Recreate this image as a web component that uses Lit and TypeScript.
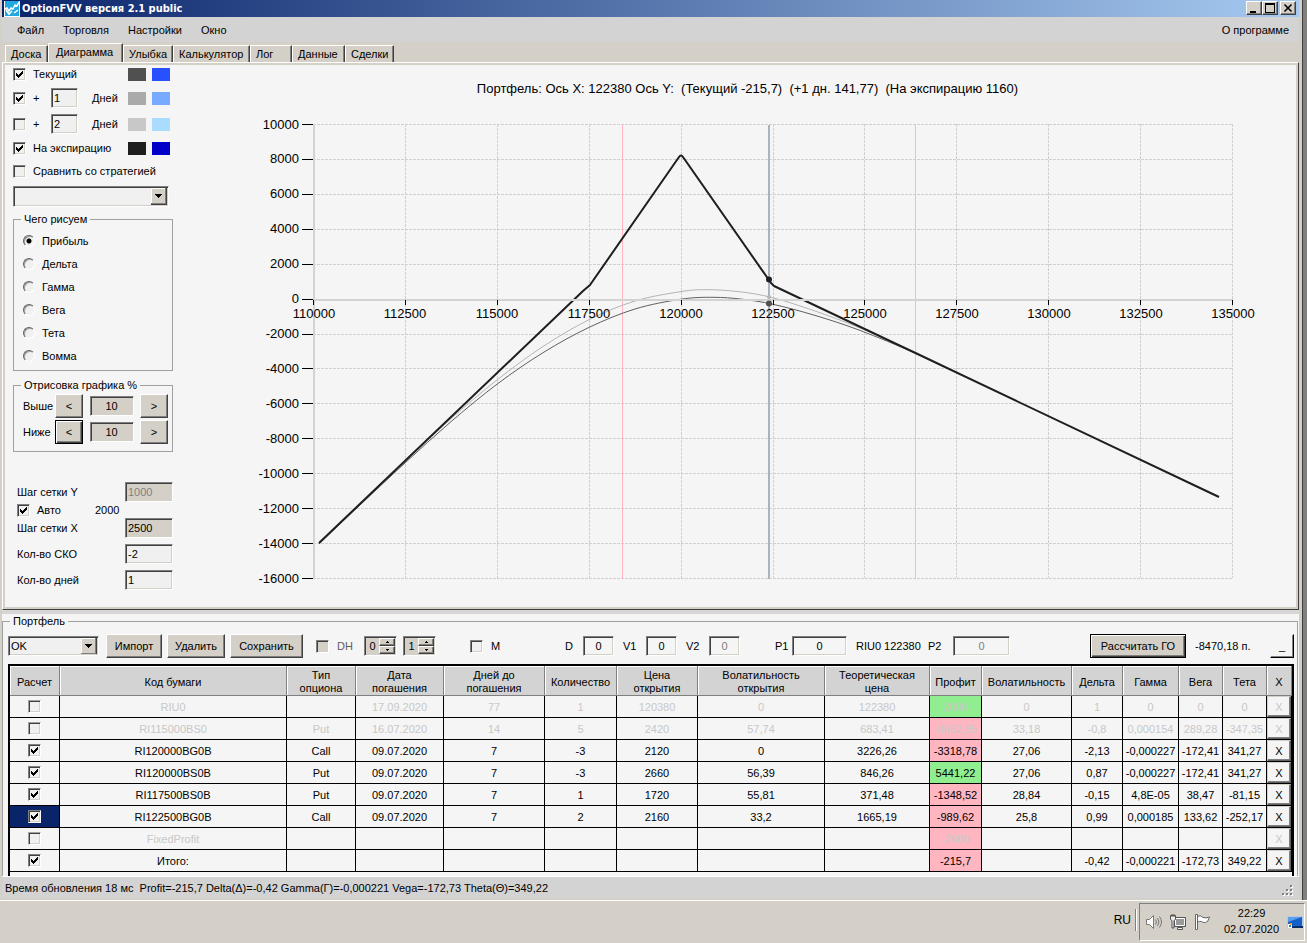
import { LitElement, html, svg, css, nothing } from "lit";
import { customElement } from "lit/decorators.js";
import { classMap } from "lit/directives/class-map.js";
import { styleMap } from "lit/directives/style-map.js";

interface Row {
  on: boolean;
  dim?: boolean;
  selected?: boolean;
  sign: "up" | "down";
  cells: string[];
}

type Point = [number, number];

const COLUMNS: { title: string; width?: number }[] = [
  { title: "Расчет", width: 50 },
  { title: "Код бумаги" },
  { title: "Тип опциона", width: 69 },
  { title: "Дата погашения", width: 88 },
  { title: "Дней до погашения", width: 101 },
  { title: "Количество", width: 72 },
  { title: "Цена открытия", width: 81 },
  { title: "Волатильность открытия", width: 127 },
  { title: "Теоретическая цена", width: 105 },
  { title: "Профит", width: 52 },
  { title: "Волатильность", width: 90 },
  { title: "Дельта", width: 51 },
  { title: "Гамма", width: 56 },
  { title: "Вега", width: 44 },
  { title: "Тета", width: 44 },
  { title: "X", width: 25 },
];
const PROFIT = 8;

const ROWS: Row[] = [
  { on: false, dim: true, sign: "up", cells: ["RIU0", "", "17.09.2020", "77", "1", "120380", "0", "122380", "2000", "0", "1", "0", "0", "0"] },
  { on: false, dim: true, sign: "down", cells: ["RI115000BS0", "Put", "16.07.2020", "14", "5", "2420", "57,74", "683,41", "-8682,95", "33,18", "-0,8", "0,000154", "289,28", "-347,35"] },
  { on: true, sign: "down", cells: ["RI120000BG0B", "Call", "09.07.2020", "7", "-3", "2120", "0", "3226,26", "-3318,78", "27,06", "-2,13", "-0,000227", "-172,41", "341,27"] },
  { on: true, sign: "up", cells: ["RI120000BS0B", "Put", "09.07.2020", "7", "-3", "2660", "56,39", "846,26", "5441,22", "27,06", "0,87", "-0,000227", "-172,41", "341,27"] },
  { on: true, sign: "down", cells: ["RI117500BS0B", "Put", "09.07.2020", "7", "1", "1720", "55,81", "371,48", "-1348,52", "28,84", "-0,15", "4,8E-05", "38,47", "-81,15"] },
  { on: true, selected: true, sign: "down", cells: ["RI122500BG0B", "Call", "09.07.2020", "7", "2", "2160", "33,2", "1665,19", "-989,62", "25,8", "0,99", "0,000185", "133,62", "-252,17"] },
  { on: false, dim: true, sign: "down", cells: ["FixedProfit", "", "", "", "", "", "", "", "-2080", "", "", "", "", ""] },
  { on: true, sign: "down", cells: ["Итого:", "", "", "", "", "", "", "", "-215,7", "", "-0,42", "-0,000221", "-172,73", "349,22"] },
];

const common = css`
  * { box-sizing: border-box; }
  button, input, select { font: inherit; color: inherit; margin: 0; border-radius: 0; outline: 0; }
  button {
    display: inline-flex; align-items: center; justify-content: center; padding: 0;
    background: #d4d0c8; border: 1px solid; border-color: #fff #404040 #404040 #fff;
    box-shadow: inset -1px -1px #808080; white-space: nowrap;
  }
  button.focused { border-color: #000; box-shadow: inset 1px 1px #fff, inset -1px -1px #404040, inset -2px -2px #808080; }
  .field {
    height: 20px; min-width: 0; padding: 0 2px; background: #f0f0f0;
    border: 1px solid; border-color: #808080 #fff #fff #808080;
    box-shadow: inset 1px 1px #404040, inset -1px -1px #d4d0c8;
  }
  .field.grey { background: #d4d0c8; }
  .field.centre { text-align: center; }
  .field:disabled { color: #808080; }
  input[type="checkbox"] {
    appearance: none; flex: none; width: 13px; height: 13px; background: #f0f0f0 no-repeat;
    border: 1px solid; border-color: #808080 #fff #fff #808080;
    box-shadow: inset 1px 1px #404040, inset -1px -1px #d4d0c8; background-origin: border-box;
  }
  input[type="checkbox"]:checked {
    background-image: url("data:image/svg+xml,%3Csvg xmlns='http://www.w3.org/2000/svg' width='13' height='13'%3E%3Cpath d='M3 5h1v3h-1zM4 6h1v3h-1zM5 7h1v3h-1zM6 6h1v3h-1zM7 5h1v3h-1zM8 4h1v3h-1zM9 3h1v3h-1z'/%3E%3C/svg%3E");
  }
  input[type="radio"] {
    appearance: none; flex: none; width: 12px; height: 12px; border-radius: 50%; background: #f0f0f0;
    border: 1px solid; border-color: #606060 #fff #fff #606060; box-shadow: inset 1px 1px #a0a0a0;
  }
  input[type="radio"]:checked { background: radial-gradient(circle at center, #000 2px, #f0f0f0 3px); }
  select {
    appearance: none; height: 21px; padding: 0 20px 0 2px; width: 100%;
    border: 1px solid; border-color: #808080 #fff #fff #808080;
    box-shadow: inset 1px 1px #404040, inset -1px -1px #d4d0c8;
    background: #f0f0f0 url("data:image/svg+xml,%3Csvg xmlns='http://www.w3.org/2000/svg' width='16' height='17' shape-rendering='crispEdges'%3E%3Cpath fill='%23404040' d='M0 0h16v17H0z'/%3E%3Cpath fill='%23808080' d='M0 0h15v16H0z'/%3E%3Cpath fill='%23fff' d='M0 0h14v15H0z'/%3E%3Cpath fill='%23d4d0c8' d='M1 1h13v14H1z'/%3E%3Cpath d='M4 6h7v1H4zM5 7h5v1H5zM6 8h3v1H6zM7 9h1v1H7z'/%3E%3C/svg%3E") no-repeat right 1px top 1px;
  }
  fieldset { min-width: 0; margin: 0; border: 1px solid #a0a0a0; box-shadow: none; }
  legend { padding: 0 3px; height: 14px; line-height: 14px; }
`;

/* Profit diagram: grid, expiry payoff and the two current curves. */
@customElement("profit-chart")
export class ProfitChart extends LitElement {
  static styles = css`
    :host { display: flex; flex-direction: column; min-width: 0; }
    h2 { margin: 0; padding-top: 18px; font-size: 13px; line-height: 16px; font-weight: 400; text-align: center; white-space: pre; }
    svg { flex: 1; width: 100%; min-height: 0; display: block; }
    text { font-size: 13px; fill: #000; }
    .grid { stroke: #d0d0d0; stroke-dasharray: 3 1; fill: none; }
    .tick { stroke: #000; }
    .axis { stroke: #d3d3d3; stroke-width: 2; }
    .sigma { stroke: #ffb6c1; }
    .price { stroke: #a9b4be; stroke-width: 2; }
    .current { stroke: #606060; fill: none; }
    .next { stroke: #b4b4b4; fill: none; }
    .expiry { stroke: #1e1e1e; stroke-width: 2; fill: none; stroke-linejoin: round; }
    .dot-expiry { fill: #1e1e1e; }
    .dot-current { fill: #505050; }
    .dot-next { fill: #b4b4b4; }
  `;

  private x(v: number) { return 313.5 + ((v - 110000) / 25000) * 919; }
  private y(v: number) { return 124.5 + ((10000 - v) / 26000) * 454; }

  private smooth(p: Point[]) {
    let d = `M${p[0][0]} ${p[0][1]}`;
    for (let i = 0; i < p.length - 1; i++) {
      const a = p[Math.max(i - 1, 0)], b = p[i], c = p[i + 1], e = p[Math.min(i + 2, p.length - 1)];
      d += `C${b[0] + (c[0] - a[0]) / 6} ${b[1] + (c[1] - a[1]) / 6} ${c[0] - (e[0] - b[0]) / 6} ${c[1] - (e[1] - b[1]) / 6} ${c[0]} ${c[1]}`;
    }
    return d;
  }

  render() {
    const xs = Array.from({ length: 11 }, (_, i) => 110000 + i * 2500);
    const ys = Array.from({ length: 14 }, (_, i) => 10000 - i * 2000);
    const snap = (n: number) => Math.floor(n) + 0.5;
    const zero = this.y(0);
    const current: Point[] = [[319, 544], [360, 505], [405, 463], [450, 422.5], [497, 384.2], [543, 352.7], [589, 327.4], [635, 309], [681, 299.2], [713, 297.3], [742, 299.2], [773, 304.3], [815, 315.4], [860, 330.4], [915, 353], [960, 374]];
    const next: Point[] = [[319, 543], [360, 504], [405, 461.5], [450, 419.5], [497, 380], [543, 346.5], [589, 319.7], [635, 301], [681, 291.6], [707, 289.7], [740, 291.8], [773, 297.8], [815, 311], [860, 328], [915, 352], [960, 374]];
    return html`
      <h2>Портфель: Ось X: 122380 Ось Y:  (Текущий -215,7)  (+1 дн. 141,77)  (На экспирацию 1160)</h2>
      <svg viewBox="200 97 1095 510" role="img" aria-label="Портфель">
        ${xs.map((v) => svg`<path class="grid" d="M${snap(this.x(v))} 124V578"/>`)}
        ${ys.map((v) => svg`<path class="grid" d="M313 ${snap(this.y(v))}H1233"/>`)}
        <path class="axis" d="M314 124V579" />
        <path class="sigma" d="M622.5 125V579" />
        <path class="sigma" d="M915.5 125V579" />
        <path class="price" d="M769 125V579" />
        <path class="current" d=${this.smooth(current)} />
        <path class="next" d=${this.smooth(next)} />
        <path class="expiry" d="M319 543L583 291L590 285L679 157Q681 154 683 157L771 283L774 286L1219 497" />
        <path class="axis" d="M313 ${Math.round(zero) + 1}H1233" />
        <circle class="dot-next" cx="769" cy="297" r="2" />
        <circle class="dot-expiry" cx="769" cy="279.5" r="3" />
        <circle class="dot-current" cx="769" cy="303.5" r="3" />
        ${ys.map((v) => svg`<path class="tick" d="M302 ${snap(this.y(v))}H313"/><text x="299" y=${Math.round(this.y(v)) + 4} text-anchor="end">${v}</text>`)}
        ${xs.map((v) => svg`<path class="tick" d="M${snap(this.x(v))} 300V305"/><text x=${Math.round(this.x(v))} y="318" text-anchor="middle">${v}</text>`)}
      </svg>`;
  }
}

@customElement("chart-settings")
export class ChartSettings extends LitElement {
  static styles = [common, css`
    :host { display: block; padding: 0 0 12px 7px; }
    .inner { width: 160px; }
    .line { display: grid; align-items: center; height: 22px; }
    .line label { white-space: nowrap; }
    .line.num { grid-template-columns: 20px 18px 27px 14px 1fr 18px 6px 18px; height: 26px; }
    .line.plain { grid-template-columns: 20px 1fr 18px 6px 18px; }
    .line.last { height: 24px; grid-template-columns: 20px 1fr; }
    .colors { padding-right: 3px; }
    .swatch { height: 13px; }
    .days { grid-column: 5; }
    .g50 { background: #505050; } .b1 { background: #2850ff; }
    .gaa { background: #aaa; } .b2 { background: #78aaff; }
    .gc8 { background: #c8c8c8; } .b3 { background: #aadcff; }
    .g1e { background: #1e1e1e; } .b4 { background: #0000c8; }
    .strategy { width: 156px; display: block; margin-top: 3px; }
    fieldset { padding: 3px 9px; margin-top: 5px; }
    legend { margin-left: -2px; }
    .radio { display: flex; gap: 7px; align-items: center; height: 23px; }
    .range { padding: 1px 4px 6px 9px; margin-top: 7px; }
    .step { display: grid; grid-template-columns: 32px 28px 1fr 28px; align-items: center; height: 26px; }
    .step button { height: 24px; }
    .step .field { width: 44px; justify-self: center; }
    .form { margin: 30px 0 0 4px; width: 156px; display: grid; grid-template-columns: 78px 30px 48px; align-items: center; }
    .form .caption { grid-column: 1 / 3; }
    .form .field { width: 48px; }
    .auto { grid-column: 1; display: flex; align-items: center; gap: 7px; height: 16px; }
    .value { grid-column: 2 / 4; }
    .form .spaced { margin-top: 6px; }
  `];

  private swatches(a: string, b: string) {
    return html`<span class="swatch ${a}"></span><span></span><span class="swatch ${b}"></span>`;
  }

  render() {
    const kinds = ["Прибыль", "Дельта", "Гамма", "Вега", "Тета", "Вомма"];
    const steps = ["Выше", "Ниже"];
    return html`<div class="inner">
      <div class="colors">
        <div class="line plain"><input type="checkbox" id="cur" checked /><label for="cur">Текущий</label>${this.swatches("g50", "b1")}</div>
        <div class="line num"><input type="checkbox" id="p1" checked /><label for="p1">+</label><input class="field" id="d1" value="1" /><label class="days" for="d1">Дней</label>${this.swatches("gaa", "b2")}</div>
        <div class="line num"><input type="checkbox" id="p2" /><label for="p2">+</label><input class="field" id="d2" value="2" /><label class="days" for="d2">Дней</label>${this.swatches("gc8", "b3")}</div>
        <div class="line plain"><input type="checkbox" id="exp" checked /><label for="exp">На экспирацию</label>${this.swatches("g1e", "b4")}</div>
        <div class="line last"><input type="checkbox" id="cmp" /><label for="cmp">Сравнить со стратегией</label></div>
      </div>
      <select class="strategy" aria-label="Стратегия"><option></option></select>
      <fieldset>
        <legend>Чего рисуем</legend>
        ${kinds.map((k, i) => html`<label class="radio"><input type="radio" name="kind" ?checked=${i === 0} />${k}</label>`)}
      </fieldset>
      <fieldset class="range">
        <legend>Отрисовка графика %</legend>
        ${steps.map((s, i) => html`<div class="step"><label for="s${i}">${s}</label>
          <button class=${classMap({ focused: i === 1 })}>&lt;</button>
          <input class="field grey centre" id="s${i}" value="10" />
          <button>&gt;</button></div>`)}
      </fieldset>
      <div class="form">
        <label class="caption" for="sy">Шаг сетки Y</label><input class="field grey" id="sy" value="1000" disabled />
        <label class="auto"><input type="checkbox" checked />Авто</label><span class="value">2000</span>
        <label class="caption" for="sx">Шаг сетки X</label><input class="field grey" id="sx" value="2500" />
        <label class="caption spaced" for="sko">Кол-во СКО</label><input class="field spaced" id="sko" value="-2" />
        <label class="caption spaced" for="dn">Кол-во дней</label><input class="field spaced" id="dn" value="1" />
      </div>
    </div>`;
  }
}

@customElement("portfolio-panel")
export class PortfolioPanel extends LitElement {
  static styles = [common, css`
    :host { display: block; background: #f5f5f5; }
    fieldset { padding: 0 3px 0 5px; margin: 0 1px 0 0; border-bottom: 0; }
    legend { margin-left: 2px; }
    .bar { display: grid; align-items: center; height: 36px; white-space: nowrap;
      grid-template-columns: 98px 61px 63px 86px 48px 39px 67px 95px 58px 63px 89px 81px 72px 82px 1fr; }
    .bar select { width: 91px; height: 20px; }
    .bar button { height: 24px; }
    .import { width: 56px; } .remove { width: 58px; } .save { width: 73px; }
    .check { display: flex; align-items: center; gap: 8px; }
    .off { color: #606060; }
    .off input[type="checkbox"] { background-color: #d4d0c8; }
    .spin { display: grid; grid-template-columns: 13px 16px; width: 33px; height: 20px; padding: 1px; background: #d4d0c8;
      border: 1px solid; border-color: #808080 #fff #fff #808080; box-shadow: inset 1px 1px #404040; }
    .spin input { border: 0; background: none; padding: 0; text-align: center; width: 13px; grid-row: 1 / 3; }
    .bar .spin button { height: 8px; }
    .spin svg { width: 5px; height: 3px; }
    .pair { display: grid; grid-template-columns: 18px 31px; align-items: center; }
    .v { grid-template-columns: 23px 31px; }
    .p { grid-template-columns: 17px 55px; }
    .p2 { grid-template-columns: 25px 57px; }
    .pair .field { background: #f5f5f5; width: 100%; }
    .end { display: flex; justify-content: flex-end; align-items: center; }
    .calc { width: 96px; }
    .sum { width: 84px; padding-left: 9px; }
    .bar .mini { background: #f5f5f5; width: 24px; border-color: #f5f5f5 #000 #000 #f5f5f5; }
    .frame { border: 2px solid #000; border-bottom: 0; padding-bottom: 4px; }
    table { width: 100%; table-layout: fixed; border-collapse: separate; border-spacing: 0; }
    th { height: 30px; padding: 3px 4px 0; font-weight: 400; line-height: 13px; background: #d3d3d3; border-bottom: 1px solid #808080;
      border-right: 1px solid #808080; box-shadow: inset 1px 1px #fff; vertical-align: middle; }
    td { height: 22px; padding: 0; line-height: 14px; text-align: center; border: solid #000; border-width: 0 1px 1px 0; white-space: nowrap; overflow: hidden; }
    td input[type="checkbox"] { display: block; margin: 0 auto; }
    .dim td { color: #c8c8c8; }
    .dim td input[type="checkbox"] { border-color: #a0a0a0 #fff #fff #a0a0a0; }
    td.up { background: #90ee90; }
    td.down { background: #ffb6c1; }
    td.selected { background: #0a246a; }
    td button { width: 100%; height: 21px; background: #f5f5f5; border-color: #d4d0c8 #606060 #606060 #d4d0c8; }
  `];

  private spin(value: string, label: string) {
    return html`<span class="spin"><input value=${value} aria-label=${label} />
      <button aria-label="Больше"><svg viewBox="0 0 5 3"><path d="M2 0h1v1H2zM1 1h3v1H1z" /></svg></button>
      <button aria-label="Меньше"><svg viewBox="0 0 5 3"><path d="M1 0h3v1H1zM2 1h1v1H2z" /></svg></button></span>`;
  }

  render() {
    return html`<fieldset>
      <legend>Портфель</legend>
      <div class="bar">
        <select aria-label="Портфель"><option>OK</option></select>
        <button class="import">Импорт</button>
        <button class="remove">Удалить</button>
        <button class="save">Сохранить</button>
        <label class="check off"><input type="checkbox" />DH</label>
        ${this.spin("0", "DH 1")}${this.spin("1", "DH 2")}
        <label class="check"><input type="checkbox" />M</label>
        <label class="pair">D<input class="field centre" value="0" /></label>
        <label class="pair v">V1<input class="field centre" value="0" /></label>
        <label class="pair v">V2<input class="field centre" value="0" disabled /></label>
        <label class="pair p">P1<input class="field centre" value="0" /></label>
        <span>RIU0 122380</span>
        <label class="pair p2">P2<input class="field centre" value="0" disabled /></label>
        <div class="end"><button class="calc focused">Рассчитать ГО</button><span class="sum">-8470,18 п.</span><button class="mini">_</button></div>
      </div>
      <div class="frame"><table>
        <colgroup>${COLUMNS.map((c) => html`<col style=${styleMap(c.width ? { width: c.width + "px" } : {})} />`)}</colgroup>
        <thead><tr>${COLUMNS.map((c) => html`<th>${c.title}</th>`)}</tr></thead>
        <tbody>${ROWS.map((r) => html`<tr class=${classMap({ dim: !!r.dim })}>
          <td class=${classMap({ selected: !!r.selected })}><input type="checkbox" aria-label=${r.cells[0]} ?checked=${r.on} /></td>
          ${r.cells.map((c, i) => html`<td class=${i === PROFIT ? r.sign : ""}>${c || nothing}</td>`)}
          <td><button>X</button></td>
        </tr>`)}</tbody>
      </table></div>
    </fieldset>`;
  }
}

@customElement("app-root")
export class AppRoot extends LitElement {
  static styles = [common, css`
    :host { display: flex; flex-direction: column; min-height: 100vh; background: #d4d0c8; color: #000;
      font: 11px/14px "Liberation Sans", Arial, sans-serif; }
    .desk { flex: 1; display: flex; background: #808080; padding-right: 4px; }
    .window { flex: 1; min-width: 0; display: flex; flex-direction: column; background: #d4d0c8; padding: 0 3px 2px 2px; border-right: 1px solid #404040; }
    .title { display: flex; align-items: center; height: 17px; padding-right: 3px; color: #fff;
      background: linear-gradient(90deg, #0a246a, #a6caf0); font: bold 11px/14px "DejaVu Sans Condensed", "DejaVu Sans", sans-serif; }
    .title svg { display: block; }
    .logo { width: 16px; height: 16px; margin: 0 2px 0 2px; }
    .title h1 { font: inherit; margin: 0; flex: 1; }
    .title button { width: 16px; height: 14px; margin-bottom: 1px; }
    .title button:last-child { margin-left: 2px; }
    .title button svg { width: 12px; height: 10px; }
    .menu { display: flex; height: 25px; align-items: center; background: #d3d3d3; padding: 0 10px 0 15px; gap: 19px; }
    .menu a { color: #000; text-decoration: none; }
    .menu a:last-child { margin-left: auto; }
    .tabs { display: flex; align-items: flex-end; height: 20px; padding-left: 3px; }
    .tabs button { height: 17px; padding: 0 0 0 5px; border-width: 1px 1px 0 1px; border-color: #fff #404040 #fff #fff; box-shadow: inset -1px 0 #808080; justify-content: flex-start; }
    .tabs button.active { height: 19px; padding: 0 0 2px 7px; }
    .page { flex: 1; display: grid; grid-template-columns: 194px 1fr; background: #f5f5f5; border-style: solid;
      border-color: #fff #404040 #404040 #fff; border-width: 1px; outline: 2px solid #d4d0c8; outline-offset: -3px; padding: 0 3px 2px 3px; }
    .gap { height: 4px; background: #d8d5d6; }
    .status { height: 22px; padding: 4px 5px 0 3px; border-top: 1px solid #fff; background: #d3d3d3; display: flex; justify-content: space-between; white-space: pre; }
    .status svg { width: 12px; height: 12px; margin-top: 4px; }
    .taskbar { height: 43px; border-top: 1px solid #fff; display: flex; justify-content: flex-end; padding: 2px 2px 2px 0; align-items: center; }
    .lang { font-size: 12px; padding: 0 4px 4px; }
    .sep { width: 2px; height: 22px; border-left: 1px solid #808080; border-right: 1px solid #fff; margin: 0 2px 4px 0; }
    .tray { display: flex; align-items: center; align-self: stretch; gap: 8px; padding-left: 6px; width: 166px;
      border: 1px solid; border-color: #808080 #fff #fff #808080; }
    .tray svg { width: 16px; height: 16px; flex: none; }
    .clock { flex: 1; text-align: center; line-height: 16px; padding: 0 0 2px 6px; }
    .tray svg.screen { margin-right: 1px; }
  `];

  render() {
    const tabs: [string, number][] = [["Доска", 43], ["Диаграмма", 75], ["Улыбка", 50], ["Калькулятор", 77], ["Лог", 42], ["Данные", 53], ["Сделки", 49]];
    return html`
      <div class="desk"><main class="window">
        <header class="title">
          <svg class="logo" viewBox="0 0 16 16"><path fill="#fff" d="M0 0h16v16H0z" /><path fill="#20a8e0" d="M1 0h14v15H1z" /><path fill="none" stroke="#fff" stroke-width="1.500" d="M1 8l2-1 2 3 2-3 2 1 2-4 2 1 2-4M2 9l3 4 3-3M10 12l4-3" /></svg>
          <h1>OptionFVV версия 2.1 public</h1>
          <button aria-label="Свернуть"><svg viewBox="0 0 12 10"><path d="M2 8h6v2H2z" /></svg></button>
          <button aria-label="Развернуть"><svg viewBox="0 0 12 10"><path fill-rule="evenodd" d="M1 0h10v10H1zM2 2v7h8V2z" /></svg></button>
          <button aria-label="Закрыть"><svg viewBox="0 0 12 10"><path stroke="#000" stroke-width="1.6" d="M2.500 1.500l7 7M9.500 1.500l-7 7" /></svg></button>
        </header>
        <nav class="menu"><a href="#file">Файл</a><a href="#trade">Торговля</a><a href="#settings">Настройки</a><a href="#window">Окно</a><a href="#about">О программе</a></nav>
        <div class="tabs" role="tablist">${tabs.map(([t, w], i) => html`<button role="tab" class=${classMap({ active: i === 1 })} style=${styleMap({ width: w + "px" })}>${t}</button>`)}</div>
        <section class="page"><chart-settings></chart-settings><profit-chart></profit-chart></section>
        <div class="gap"></div>
        <portfolio-panel></portfolio-panel>
        <footer class="status"><span>Время обновления 18 мс  Profit=-215,7 Delta(Δ)=-0,42 Gamma(Г)=-0,000221 Vega=-172,73 Theta(Θ)=349,22</span>
          <svg viewBox="0 0 12 12"><path fill="#fff" d="M9 1h2v2H9zM9 5h2v2H9zM5 5h2v2H5zM9 9h2v2H9zM5 9h2v2H5zM1 9h2v2H1z" /><path fill="#808080" d="M8 0h2v2H8zM8 4h2v2H8zM4 4h2v2H4zM8 8h2v2H8zM4 8h2v2H4zM0 8h2v2H0z" /></svg></footer>
      </main></div>
      <div class="taskbar">
        <span class="lang">RU</span><span class="sep"></span>
        <div class="tray">
          <svg viewBox="0 0 16 16"><path fill="#fff" stroke="#777" d="M.5 5.500h3l4-4v13l-4-4h-3z" /><path fill="none" stroke="#777" d="M9.500 5.500q2 2.500 0 5M11.500 4q3 4 0 8M13.500 2.500q4 5.500 0 11" /></svg>
          <svg viewBox="0 0 16 16"><path fill="#999" stroke="#555" d="M4.500 3.500h11v9h-11z" /><path fill="none" stroke="#fff" d="M5.500 4.500h9v7h-9z" /><path fill="#eee" stroke="#555" d="M.5 1.500h5v4l-1.500 1v7.500h-2V6.500l-1.500-1zM7.500 15.500v-2h5v2z" /><path stroke="#555" d="M2 0v3M4 0v3" /></svg>
          <svg viewBox="0 0 16 16"><path fill="#fff" stroke="#666" d="M3.500 2.500q3-2 5.500 1 3 1 6.500-.5-1 5-4 5.500-2 .5-4-1-2-.5-4 .5z" /><path fill="#fff" stroke="#666" d="M1.500.5h2v15h-2z" /></svg>
          <div class="clock">22:29<br />02.07.2020</div>
          <svg class="screen" viewBox="0 0 16 16"><path fill="#b8c8d8" d="M0 2h16v12H0z" /><path fill="#1560c8" d="M1 3h14v9H1z" /><path fill="#5aa0f0" d="M1 3h14L1 8z" /><path fill="#083068" d="M5 12h11v2H5z" /><path fill="#fff" d="M1 10h4v4H1z" /><path fill="#f0a020" d="M3 9h2v2H3z" /><path fill="#2080e0" d="M2 11h2v2H2z" /></svg>
        </div>
      </div>`;
  }
}
